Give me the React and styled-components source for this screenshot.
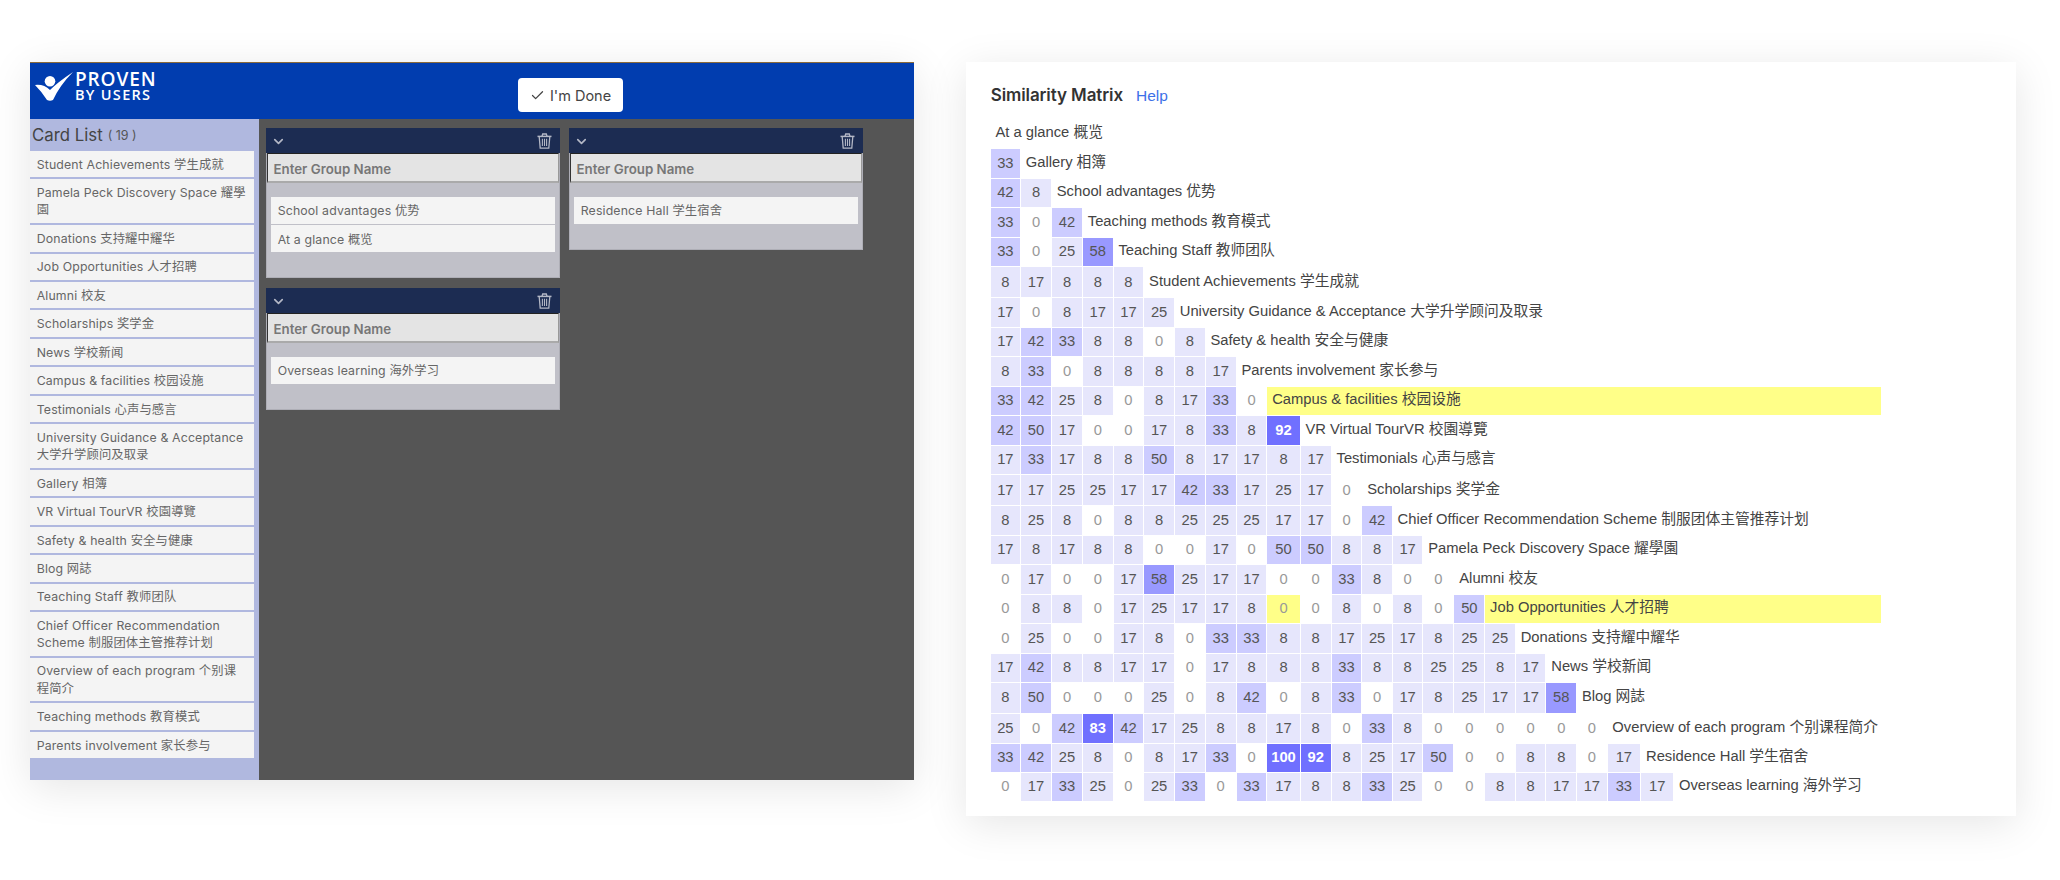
import React from "react";
import styled, { createGlobalStyle } from "styled-components";
import { ChevronDown, Check } from "lucide-react";

const UI = `Inter, "Noto Sans CJK SC", sans-serif`;
const TABLE = `"Liberation Sans", "Noto Sans CJK SC", sans-serif`;

const Global = createGlobalStyle`
  html, body { margin: 0; padding: 0; background: #fff; }
  * { box-sizing: border-box; }
`;

const Page = styled.div`
  width: 2060px;
  height: 880px;
  padding: 62px 44px 0 30px;
  display: flex;
  align-items: flex-start;
  gap: 52px;
  background: #fff;
  overflow: hidden;
`;

const AppPanel = styled.section`
  width: 884px;
  height: 718px;
  flex: none;
  display: flex;
  flex-direction: column;
  box-shadow: 0 8px 40px rgba(0, 0, 0, 0.1);
`;

const Header = styled.header`
  height: 57px;
  flex: none;
  display: flex;
  align-items: flex-start;
  background: #013daf;
  border-top: 1px solid #8a6a3a;
  padding: 9px 0 0 5px;
`;

const Logo = styled.div`
  display: flex;
  align-items: flex-start;
  gap: 2px;
  width: 122px;
  color: #fff;
  svg { flex: none; }
`;

const LogoWords = styled.div`
  display: flex;
  flex-direction: column;
  font-family: "Open Sans", sans-serif;
  font-weight: 600;
`;

const LogoTop = styled.span`
  font-size: 19px;
  line-height: 15px;
  letter-spacing: 0.9px;
`;

const LogoBottom = styled.span`
  font-size: 14.5px;
  line-height: 15px;
  letter-spacing: 1.3px;
  white-space: nowrap;
`;

const DoneButton = styled.button`
  margin: 6px 0 0 361px;
  width: 105px;
  height: 34px;
  border: 0;
  border-radius: 4px;
  background: #fff;
  display: flex;
  align-items: center;
  justify-content: center;
  gap: 5px;
  font: 400 14.5px ${UI};
  color: #444;
`;

const Body = styled.div`
  flex: 1;
  display: flex;
  min-height: 0;
`;

const Sidebar = styled.aside`
  width: 229px;
  flex: none;
  background: #b0b8df;
  padding-right: 5px;
`;

const SidebarTitle = styled.h2`
  height: 32px;
  margin: 0;
  padding-left: 2px;
  display: flex;
  align-items: center;
  gap: 5px;
  font: 400 16.8px ${UI};
  color: #444;
`;

const Count = styled.span`
  font-size: 12.5px;
  color: #555;
`;

const CardList = styled.div`
  display: flex;
  flex-direction: column;
  gap: 2px;
`;

const ListCard = styled.div`
  background: #f4f4f4;
  padding: 4.7px 6.7px;
  font: 400 12.3px/17.1px ${UI};
  letter-spacing: 0.15px;
  color: #666;
`;

const Board = styled.main`
  flex: 1;
  background: #555;
  padding: 9.3px 0 0 7px;
  display: flex;
  align-items: flex-start;
  gap: 9.5px;
`;

const BoardColumn = styled.div`
  display: flex;
  flex-direction: column;
  gap: 10px;
  width: 293.5px;
`;

const Group = styled.article`
  background: #c0c0c8;
  border: 1px solid #aeaeb6;
  border-top: 0;
`;

const GroupBar = styled.div`
  height: 25px;
  background: #1c2c52;
  margin: 0 -1px;
  display: flex;
  align-items: center;
  justify-content: space-between;
  padding: 1px 7.5px 0 5px;
  color: #b4b8c6;
`;

const GroupName = styled.div`
  height: 30px;
  background: #e4e4e4;
  border-style: solid;
  border-color: #222 #999 #aaa #333;
  border-width: 1px 1px 2px 1px;
  padding: 2px 0 0 5.5px;
  display: flex;
  align-items: center;
  font: 600 13.3px ${UI};
  color: #777;
`;

const GroupCards = styled.div`
  display: flex;
  flex-direction: column;
  gap: 1.7px;
  padding: 13.5px 4px 25px;
`;

const GroupCard = styled.div`
  height: 27px;
  background: #f4f4f4;
  padding-left: 6.7px;
  display: flex;
  align-items: center;
  font: 400 12.3px ${UI};
  letter-spacing: 0.15px;
  color: #666;
`;

const MatrixPanel = styled.section`
  width: 1050px;
  height: 754px;
  flex: none;
  background: #fff;
  padding: 21px 0 0 24.7px;
  box-shadow: 0 8px 40px rgba(0, 0, 0, 0.1);
`;

const TitleRow = styled.div`
  display: flex;
  align-items: center;
  gap: 13px;
  height: 24px;
`;

const Title = styled.h2`
  margin: 0;
  font: 600 17px ${UI};
  letter-spacing: -0.1px;
  color: #333;
`;

const HelpLink = styled.a`
  font: 400 15.5px ${TABLE};
  color: #3d70e8;
  padding-top: 2px;
`;

const ROW_HEIGHTS = [28.6, 28.7, 28.6, 28.4, 28.6, 29.7, 28.7, 28.3, 28.7, 28.3, 28.7, 28.6, 29.7, 28.7, 28.3, 29, 28, 28.7, 28.6, 29.7, 28.7, 28.6, 27.4];

const Matrix = styled.div`
  display: grid;
  margin-top: 12.4px;
  gap: 1px;
  grid-template-columns: 29.3px 30px 30px 29.6px 29.7px 29.7px 29.7px 30.1px 29.7px 32.2px 30.1px 29.7px 29.4px 29.7px 30px 29.8px 29.6px 29.6px 29.7px 29.4px 32.7px 32px 207px;
  grid-template-rows: ${ROW_HEIGHTS.map((h) => `${h}px`).join(" ")};
  width: 891px;
  font: 400 14.75px/18px ${TABLE};
`;

const cellBg = (v, hot) => {
  if (hot) return "#ffff88";
  if (v === 0) return "#fff";
  if (v < 30) return "#e6e6fc";
  if (v < 55) return "#ccccff";
  if (v < 70) return "#9999ff";
  return "#7070ff";
};

const Cell = styled.div`
  display: flex;
  align-items: center;
  justify-content: center;
  padding-bottom: 1px;
  background: ${(p) => cellBg(p.$v, p.$hot)};
  color: ${(p) => (p.$v === 0 ? "#999" : p.$v >= 70 ? "#fff" : "#555")};
  font-weight: ${(p) => (p.$v >= 70 ? 700 : 400)};
`;

const Label = styled.div`
  grid-column: ${(p) => p.$start} / -1;
  display: flex;
  align-items: center;
  padding: 0 0 3px 4.8px;
  white-space: nowrap;
  color: #444;
  background: ${(p) => (p.$hot ? "#ffff88" : "transparent")};
`;

const cards = [
  "Student Achievements 学生成就",
  "Pamela Peck Discovery Space 耀學園",
  "Donations 支持耀中耀华",
  "Job Opportunities 人才招聘",
  "Alumni 校友",
  "Scholarships 奖学金",
  "News 学校新闻",
  "Campus & facilities 校园设施",
  "Testimonials 心声与感言",
  "University Guidance & Acceptance 大学升学顾问及取录",
  "Gallery 相簿",
  "VR Virtual TourVR 校園導覽",
  "Safety & health 安全与健康",
  "Blog 网誌",
  "Teaching Staff 教师团队",
  "Chief Officer Recommendation Scheme 制服团体主管推荐计划",
  "Overview of each program 个别课程简介",
  "Teaching methods 教育模式",
  "Parents involvement 家长参与",
];

const rows = [
  ["At a glance 概览", []],
  ["Gallery 相簿", [33]],
  ["School advantages 优势", [42, 8]],
  ["Teaching methods 教育模式", [33, 0, 42]],
  ["Teaching Staff 教师团队", [33, 0, 25, 58]],
  ["Student Achievements 学生成就", [8, 17, 8, 8, 8]],
  ["University Guidance & Acceptance 大学升学顾问及取录", [17, 0, 8, 17, 17, 25]],
  ["Safety & health 安全与健康", [17, 42, 33, 8, 8, 0, 8]],
  ["Parents involvement 家长参与", [8, 33, 0, 8, 8, 8, 8, 17]],
  ["Campus & facilities 校园设施", [33, 42, 25, 8, 0, 8, 17, 33, 0]],
  ["VR Virtual TourVR 校園導覽", [42, 50, 17, 0, 0, 17, 8, 33, 8, 92]],
  ["Testimonials 心声与感言", [17, 33, 17, 8, 8, 50, 8, 17, 17, 8, 17]],
  ["Scholarships 奖学金", [17, 17, 25, 25, 17, 17, 42, 33, 17, 25, 17, 0]],
  ["Chief Officer Recommendation Scheme 制服团体主管推荐计划", [8, 25, 8, 0, 8, 8, 25, 25, 25, 17, 17, 0, 42]],
  ["Pamela Peck Discovery Space 耀學園", [17, 8, 17, 8, 8, 0, 0, 17, 0, 50, 50, 8, 8, 17]],
  ["Alumni 校友", [0, 17, 0, 0, 17, 58, 25, 17, 17, 0, 0, 33, 8, 0, 0]],
  ["Job Opportunities 人才招聘", [0, 8, 8, 0, 17, 25, 17, 17, 8, 0, 0, 8, 0, 8, 0, 50]],
  ["Donations 支持耀中耀华", [0, 25, 0, 0, 17, 8, 0, 33, 33, 8, 8, 17, 25, 17, 8, 25, 25]],
  ["News 学校新闻", [17, 42, 8, 8, 17, 17, 0, 17, 8, 8, 8, 33, 8, 8, 25, 25, 8, 17]],
  ["Blog 网誌", [8, 50, 0, 0, 0, 25, 0, 8, 42, 0, 8, 33, 0, 17, 8, 25, 17, 17, 58]],
  ["Overview of each program 个别课程简介", [25, 0, 42, 83, 42, 17, 25, 8, 8, 17, 8, 0, 33, 8, 0, 0, 0, 0, 0, 0]],
  ["Residence Hall 学生宿舍", [33, 42, 25, 8, 0, 8, 17, 33, 0, 100, 92, 8, 25, 17, 50, 0, 0, 8, 8, 0, 17]],
  ["Overseas learning 海外学习", [0, 17, 33, 25, 0, 25, 33, 0, 33, 17, 8, 8, 33, 25, 0, 0, 8, 8, 17, 17, 33, 17]],
];

const HOT_ROWS = [9, 16];

const TrashIcon = () => (
  <svg width="15" height="16" viewBox="0 0 15 16" fill="none" stroke="currentColor" strokeWidth="1.3">
    <path d="M0.5 3.4 H14.5" strokeWidth="1.5" />
    <path d="M5 3.2 L5.7 1 H9.3 L10 3.2" />
    <path d="M2.2 3.6 L3.2 15.2 H11.8 L12.8 3.6" />
    <path d="M5.4 5.8 V13 M7.5 5.8 V13 M9.6 5.8 V13" strokeWidth="1.1" />
  </svg>
);

function BoardGroup({ items }) {
  return (
    <Group>
      <GroupBar>
        <ChevronDown size={15} strokeWidth={2.6} />
        <TrashIcon />
      </GroupBar>
      <GroupName>Enter Group Name</GroupName>
      <GroupCards>
        {items.map((t) => (
          <GroupCard key={t}>{t}</GroupCard>
        ))}
      </GroupCards>
    </Group>
  );
}

export default function App() {
  return (
    <>
      <Global />
      <Page>
        <AppPanel>
          <Header>
            <Logo>
              <svg width="38" height="30" viewBox="0 0 38 30" fill="#fff">
                <circle cx="15" cy="9.3" r="5.3" />
                <path d="M0 13 Q9 12 15 18 Q23 10 38 0 Q25 13 18 28 Q15 29.5 12 28 Q7 20 0 13Z" />
              </svg>
              <LogoWords>
                <LogoTop>PROVEN</LogoTop>
                <LogoBottom>BY USERS</LogoBottom>
              </LogoWords>
            </Logo>
            <DoneButton>
              <Check size={15} strokeWidth={2} />
              I'm Done
            </DoneButton>
          </Header>
          <Body>
            <Sidebar>
              <SidebarTitle>
                Card List <Count>( 19 )</Count>
              </SidebarTitle>
              <CardList>
                {cards.map((c) => (
                  <ListCard key={c}>{c}</ListCard>
                ))}
              </CardList>
            </Sidebar>
            <Board>
              <BoardColumn>
                <BoardGroup items={["School advantages 优势", "At a glance 概览"]} />
                <BoardGroup items={["Overseas learning 海外学习"]} />
              </BoardColumn>
              <BoardColumn>
                <BoardGroup items={["Residence Hall 学生宿舍"]} />
              </BoardColumn>
            </Board>
          </Body>
        </AppPanel>
        <MatrixPanel>
          <TitleRow>
            <Title>Similarity Matrix</Title>
            <HelpLink>Help</HelpLink>
          </TitleRow>
          <Matrix>
            {rows.map(([name, vals], r) => (
              <React.Fragment key={name}>
                {vals.map((v, c) => (
                  <Cell key={c} $v={v} $hot={r === 16 && c === 9}>
                    {v}
                  </Cell>
                ))}
                <Label $start={vals.length + 1} $hot={HOT_ROWS.includes(r)}>
                  {name}
                </Label>
              </React.Fragment>
            ))}
          </Matrix>
        </MatrixPanel>
      </Page>
    </>
  );
}
